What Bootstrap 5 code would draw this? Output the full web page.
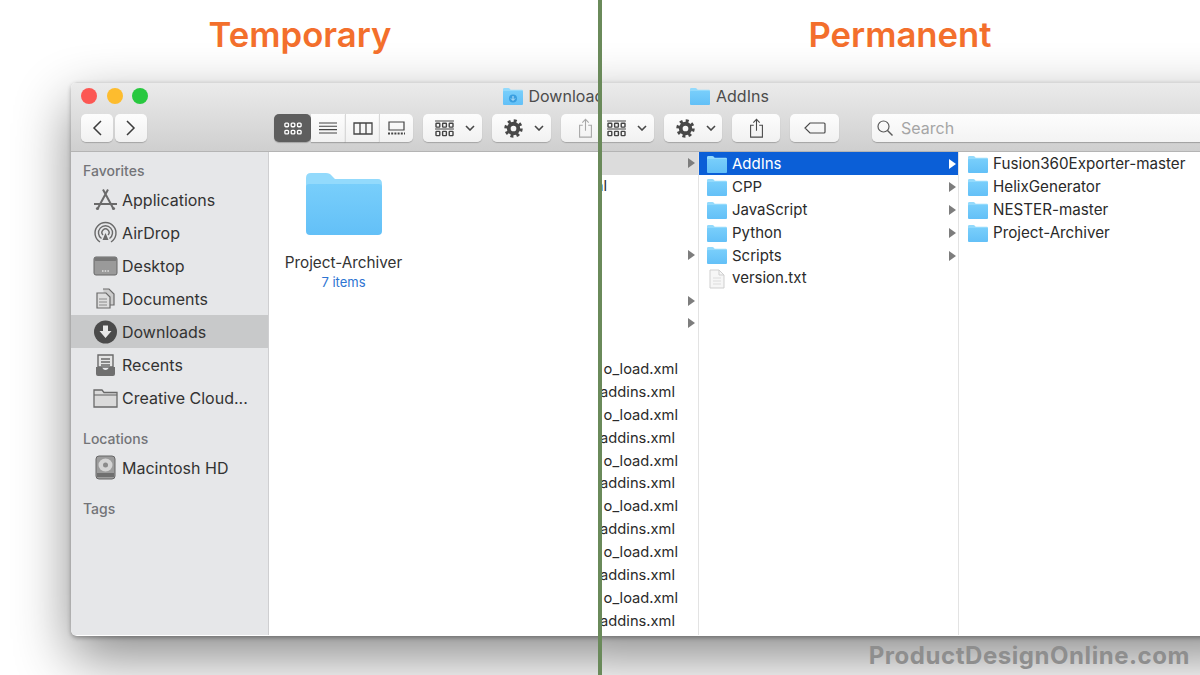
<!DOCTYPE html>
<html lang="en">
<head>
    <meta charset="UTF-8">
    <meta name="viewport" content="width=device-width, initial-scale=1.0">
    <title>Temporary vs Permanent</title>
    <link href="https://cdn.jsdelivr.net/npm/bootstrap@5.3.0/dist/css/bootstrap.min.css" rel="stylesheet">
    <style>
        html, body { height: 675px; overflow: hidden; }
        body { background: #fff; font-family: Inter, "Liberation Sans", sans-serif; color: #2f2f2f; position: relative; }
        .half { width: 600px; height: 675px; overflow: hidden; }
        .half-title { height: 82px; margin: 0; padding-top: 9px; font: 600 34.7px/50px Inter, "Liberation Sans", sans-serif; color: #f36f2c; text-align: center; }
        .mac-win { height: 554px; background: #fff; border-radius: 6px; box-shadow: 0 22px 55px rgba(0,0,0,.46), 0 2px 4px rgba(0,0,0,.3); overflow: hidden; }
        .win-left { width: 600px; margin-left: 71px; }
        .win-right { width: 700px; margin-left: -40px; }
        .chrome { height: 70px; background: linear-gradient(#ebebeb, #cfcfcf); border-top: 1px solid #d8d8d8; border-bottom: 1px solid #b4b4b4; }
        .win-title { height: 26px; font-size: 16px; color: #4c4c4c; white-space: nowrap; }
        .tl-dot { width: 16px; height: 16px; border-radius: 50%; margin-right: 9.5px; }
        .toolbar { height: 28px; margin-top: 5px; }
        .tbtn { height: 28px; padding: 0; border: 0; border-radius: 5px; background: linear-gradient(#fdfdfd, #f1f1f1); box-shadow: 0 1px 1px rgba(0,0,0,.22); display: flex; align-items: center; justify-content: center; flex: none; }
        .tbtn-menu { gap: 11px; padding-left: 5px; }
        .seg-on { background: #5e5e5e; }
        .seg-line { border-left: 1px solid #d8d8d8; }
        .searchbox { height: 28px; border-radius: 5px; background: linear-gradient(#fdfdfd, #f3f3f3); box-shadow: 0 1px 1px rgba(0,0,0,.25); color: #a5a5a5; font-size: 16px; padding-left: 5px; }
        .side { width: 198px; height: 483px; background: #e6e7e9; border-right: 1px solid #cfcfd1; padding-top: 7px; flex: none; }
        .side-head { height: 24px; line-height: 24px; padding-left: 12px; font-size: 14px; font-weight: 500; color: #737478; }
        .side-item { height: 33px; padding-left: 22px; font-size: 16px; color: #333; gap: 4px; }
        .side-item svg { flex: none; }
        .side-on { background: #c8c9ca; }
        .big-item { width: 149px; padding-top: 21px; }
        .big-name { margin-top: 18px; line-height: 20px; font-size: 15.3px; color: #333; }
        .big-sub { line-height: 18px; font-size: 13px; color: #2d74d2; }
        .col-a { width: 139px; flex: none; border-right: 1px solid #e3e3e3; }
        .col-b { width: 260px; flex: none; border-right: 1px solid #e3e3e3; }
        .frow { height: 22.87px; font-size: 15px; color: #2a2a2a; white-space: nowrap; }
        .col-a .frow { font-size: 14.7px; }
        .col-b .frow { padding-left: 8px; padding-top: 2px; gap: 5px; }
        .col-c .frow { padding-left: 9px; padding-top: 2px; gap: 5px; font-size: 15.2px; }
        .frow-grey { background: #dcdcdc; }
        .frow-blue { background: #0b5fd7; color: #fff; }
        .tri { width: 0; height: 0; border-left: 7px solid #7d7d7d; border-top: 5px solid transparent; border-bottom: 5px solid transparent; margin-left: auto; margin-right: 3px; }
        .col-b .tri { margin-right: 2px; }
        .frow-blue .tri { border-left-color: #fff; }
        .divider { position: absolute; left: 598px; top: 0; bottom: 0; width: 4px; background: #6a8a5a; }
        .watermark { position: absolute; right: 10px; top: 640px; font: 700 24px/32px Inter, "Liberation Sans", sans-serif; letter-spacing: .55px; color: #8e8e8e; }
    </style>
</head>
<body>
    <!-- shared icons -->
    <svg width="0" height="0" class="position-absolute">
        <defs>
            <linearGradient id="fgrad" x1="0" y1="0" x2="0" y2="1"><stop offset="0" stop-color="#78cefb"/><stop offset="1" stop-color="#63c0f7"/></linearGradient>
        </defs>
        <symbol id="folder" viewBox="0 0 76 62" preserveAspectRatio="none">
            <path d="M0 5Q0 0 5 0H20Q24 0 26 3L29 6H72Q76 6 76 11V30H0Z" fill="#93dafc"/>
            <path d="M0 14Q0 11 3 11H73Q76 11 76 14V58Q76 62 72 62H4Q0 62 0 58Z" fill="url(#fgrad)"/>
        </symbol>
        <symbol id="grid" viewBox="0 0 20 14">
            <g fill="none" stroke="currentColor" stroke-width="1.5"><rect x="1" y="1" width="4" height="4" rx="1"/><rect x="8" y="1" width="4" height="4" rx="1"/><rect x="15" y="1" width="4" height="4" rx="1"/><rect x="1" y="9" width="4" height="4" rx="1"/><rect x="8" y="9" width="4" height="4" rx="1"/><rect x="15" y="9" width="4" height="4" rx="1"/></g>
        </symbol>
        <symbol id="groupby" viewBox="0 0 20 18">
            <g fill="none" stroke="#444" stroke-width="1.5"><path d="M0 1h20M0 9.500h20" stroke-width="1.200"/><rect x="1" y="3.500" width="4" height="4" rx=".6"/><rect x="8" y="3.500" width="4" height="4" rx=".6"/><rect x="15" y="3.500" width="4" height="4" rx=".6"/><rect x="1" y="12" width="4" height="4.500" rx=".6"/><rect x="8" y="12" width="4" height="4.500" rx=".6"/><rect x="15" y="12" width="4" height="4.500" rx=".6"/></g>
        </symbol>
        <symbol id="gear" viewBox="0 0 20 20">
            <circle cx="10" cy="10" r="5" fill="none" stroke="#484848" stroke-width="4"/>
            <circle cx="10" cy="10" r="8" fill="none" stroke="#484848" stroke-width="3.400" stroke-dasharray="3.100 3.180"/>
        </symbol>
        <symbol id="chev" viewBox="0 0 10 6">
            <path d="M1 1l4 4 4-4" fill="none" stroke="#484848" stroke-width="1.600"/>
        </symbol>
        <symbol id="share" viewBox="0 0 16 22">
            <path d="M5 8H1.500V21H14.500V8H11M8 14V1.500M4.500 5L8 1.500 11.500 5" fill="none" stroke="currentColor" stroke-width="1.200"/>
        </symbol>
    </svg>

    <div class="d-flex">
        <!-- left half -->
        <div class="half">
            <h1 class="half-title">Temporary</h1>
            <div class="mac-win win-left">
                <div class="chrome">
                    <div class="win-title d-flex align-items-center">
                        <span class="tl-dot" style="background:#fc5753;margin-left:10px"></span>
                        <span class="tl-dot" style="background:#fdbc2e"></span>
                        <span class="tl-dot" style="background:#28c83f"></span>
                        <svg width="20" height="17" style="margin-left:345px"><use href="#folder"/><circle cx="10" cy="10.500" r="4" fill="#3a9fe0"/><path d="M10 8v4M8 10.500l2 2 2-2" stroke="#bfe6fb" fill="none"/></svg>
                        <span style="margin-left:6px">Downloads</span>
                    </div>
                    <div class="toolbar d-flex">
                        <button class="tbtn" style="width:32px;margin-left:10px"><svg width="12" height="18" viewBox="0 0 12 18"><path d="M10 2L3 9l7 7" fill="none" stroke="#3c3c3c" stroke-width="1.500"/></svg></button>
                        <button class="tbtn" style="width:32px;margin-left:2px"><svg width="12" height="18" viewBox="0 0 12 18"><path d="M2 2l7 7-7 7" fill="none" stroke="#3c3c3c" stroke-width="1.500"/></svg></button>
                        <div class="btn-group" style="margin-left:127px">
                            <button class="tbtn seg-on text-white" style="width:37px"><svg width="18" height="13"><use href="#grid"/></svg></button>
                            <button class="tbtn" style="width:34px;border-radius:0"><svg width="18" height="13" viewBox="0 0 18 13"><path d="M0 1h18M0 4.300h18M0 7.600h18M0 11h18" stroke="#444" stroke-width="1.100"/></svg></button>
                            <button class="tbtn seg-line" style="width:34px;border-radius:0"><svg width="20" height="13" viewBox="0 0 20 13"><path d="M1 1h18v11H1zM7 1v11M13 1v11" fill="none" stroke="#444" stroke-width="1.300"/></svg></button>
                            <button class="tbtn seg-line" style="width:34px;border-radius:0 5px 5px 0"><svg width="19" height="14" viewBox="0 0 19 14"><path d="M2 1h15v8H2z" fill="none" stroke="#444" stroke-width="1.200"/><path d="M1 12.500h17" stroke="#444" stroke-width="1.800" stroke-dasharray="2 1.200"/></svg></button>
                        </div>
                        <button class="tbtn tbtn-menu" style="width:59px;margin-left:10px"><svg width="19" height="17"><use href="#groupby"/></svg><svg width="10" height="6"><use href="#chev"/></svg></button>
                        <button class="tbtn tbtn-menu" style="width:59px;margin-left:10px"><svg width="19" height="19"><use href="#gear"/></svg><svg width="10" height="6"><use href="#chev"/></svg></button>
                        <button class="tbtn" style="width:48px;margin-left:10px;color:#a8a8a8"><svg width="15" height="20"><use href="#share"/></svg></button>
                    </div>
                </div>
                <div class="d-flex">
                    <div class="side">
                        <div class="side-head">Favorites</div>
                        <div class="side-item d-flex align-items-center">
                            <svg width="25" height="24" viewBox="0 0 25 24"><path d="M10 1.500l10 18.500M15 1.500L5 20" stroke="#6a6a6a" stroke-width="2" fill="none"/><path d="M1 16h23" stroke="#6a6a6a" stroke-width="2.200"/><circle cx="4.500" cy="20.500" r="1.600" fill="#6a6a6a"/><circle cx="20.500" cy="20.500" r="1.600" fill="#6a6a6a"/></svg>
                            Applications
                        </div>
                        <div class="side-item d-flex align-items-center">
                            <svg width="25" height="24" viewBox="0 0 25 24"><g fill="none" stroke="#6a6a6a" stroke-width="1.400"><path d="M7 21a10.500 10.500 0 1 1 11 0"/><path d="M8.500 17.500a7 7 0 1 1 8 0"/><path d="M10 14a3.500 3.500 0 1 1 5 0"/></g><path d="M12.500 12l3 7h-6z" fill="#6a6a6a"/></svg>
                            AirDrop
                        </div>
                        <div class="side-item d-flex align-items-center">
                            <svg width="25" height="22" viewBox="0 0 25 22"><rect x="1" y="2" width="23" height="18" rx="2" fill="#9a9a9a" stroke="#666"/><rect x="1.500" y="2.500" width="22" height="3.500" rx="1.500" fill="#777"/><path d="M9 16h7" stroke="#e2e2e2" stroke-width="1.500" stroke-dasharray="1.500 1.200"/></svg>
                            Desktop
                        </div>
                        <div class="side-item d-flex align-items-center">
                            <svg width="25" height="24" viewBox="0 0 25 24"><path d="M10 2h6l5 5v11h-8" fill="#ccc" stroke="#6a6a6a" stroke-width="1.200"/><path d="M4 6h9l4 4v11H4z" fill="#ddd" stroke="#6a6a6a" stroke-width="1.200"/><path d="M6 12h8M6 15h8M6 18h8" stroke="#8a8a8a"/></svg>
                            Documents
                        </div>
                        <div class="side-item side-on d-flex align-items-center">
                            <svg width="25" height="24" viewBox="0 0 25 24"><circle cx="12.500" cy="12" r="11.500" fill="#4b4b4b"/><path d="M10 5.500h5V11h3.500l-6 7-6-7H10z" fill="#e8e8e8"/></svg>
                            Downloads
                        </div>
                        <div class="side-item d-flex align-items-center">
                            <svg width="25" height="24" viewBox="0 0 25 24"><path d="M5 2h15v12H5z" fill="#e4e4e4" stroke="#6a6a6a" stroke-width="1.400"/><path d="M8 6h9M8 9h9M8 12h9" stroke="#6a6a6a" stroke-width="1.300"/><path d="M3 14h6q1 3 3.500 3T16 14h6v7q0 2-2 2H5q-2 0-2-2z" fill="#6f6f6f"/></svg>
                            Recents
                        </div>
                        <div class="side-item d-flex align-items-center">
                            <svg width="25" height="20" viewBox="0 0 25 20"><path d="M1 2h8l2 2.500h13V19H1z" fill="#dadada" stroke="#6a6a6a" stroke-width="1.300"/><path d="M1 7h23" stroke="#6a6a6a" stroke-width="1.100"/></svg>
                            Creative Cloud...
                        </div>
                        <div class="side-head" style="margin-top:13px">Locations</div>
                        <div class="side-item d-flex align-items-center">
                            <svg width="25" height="25" viewBox="0 0 25 25"><rect x="3" y="1" width="19" height="23" rx="3" fill="#9c9c9c" stroke="#666"/><ellipse cx="12.500" cy="10" rx="7" ry="6.500" fill="#d4d4d4"/><circle cx="12.500" cy="10" r="2.500" fill="#8a8a8a"/><rect x="4" y="18" width="17" height="4" fill="#6f6f6f"/></svg>
                            Macintosh HD
                        </div>
                        <div class="side-head" style="margin-top:13px">Tags</div>
                    </div>
                    <div class="big-item text-center">
                        <svg width="76" height="62"><use href="#folder"/></svg>
                        <div class="big-name">Project-Archiver</div>
                        <div class="big-sub">7 items</div>
                    </div>
                </div>
            </div>
        </div>

        <!-- right half -->
        <div class="half">
            <h1 class="half-title">Permanent</h1>
            <div class="mac-win win-right">
                <div class="chrome">
                    <div class="win-title d-flex align-items-center" style="padding-left:130px">
                        <svg width="20" height="17"><use href="#folder"/></svg>
                        <span style="margin-left:6px">AddIns</span>
                    </div>
                    <div class="toolbar d-flex">
                        <button class="tbtn tbtn-menu" style="width:60px;margin-left:34px"><svg width="19" height="17"><use href="#groupby"/></svg><svg width="10" height="6"><use href="#chev"/></svg></button>
                        <button class="tbtn tbtn-menu" style="width:58px;margin-left:10px"><svg width="19" height="19"><use href="#gear"/></svg><svg width="10" height="6"><use href="#chev"/></svg></button>
                        <button class="tbtn" style="width:48px;margin-left:10px;color:#4a4a4a"><svg width="15" height="20"><use href="#share"/></svg></button>
                        <button class="tbtn" style="width:49px;margin-left:10px"><svg width="22" height="12" viewBox="0 0 22 12"><path d="M6 1h14q1 0 1 1v8q0 1-1 1H6L1 6zM5 6h.1" fill="none" stroke="#4a4a4a" stroke-width="1.200"/></svg></button>
                        <div class="searchbox d-flex align-items-center flex-grow-1" style="margin-left:33px">
                            <svg width="16" height="16" viewBox="0 0 16 16" class="me-1"><circle cx="6.500" cy="6.500" r="5.500" fill="none" stroke="#5a5a5a" stroke-width="1.200"/><path d="M10.500 10.500l5 5" stroke="#5a5a5a" stroke-width="1.400"/></svg>
                            <span class="ms-1">Search</span>
                        </div>
                    </div>
                </div>
                <div class="d-flex" style="height:483px">
                    <div class="col-a" id="colA"></div>
                    <div class="col-b">
                        <div class="frow frow-blue d-flex align-items-center"><svg width="20" height="17"><use href="#folder"/></svg>AddIns<span class="tri"></span></div>
                        <div class="frow d-flex align-items-center"><svg width="20" height="17"><use href="#folder"/></svg>CPP<span class="tri"></span></div>
                        <div class="frow d-flex align-items-center"><svg width="20" height="17"><use href="#folder"/></svg>JavaScript<span class="tri"></span></div>
                        <div class="frow d-flex align-items-center"><svg width="20" height="17"><use href="#folder"/></svg>Python<span class="tri"></span></div>
                        <div class="frow d-flex align-items-center"><svg width="20" height="17"><use href="#folder"/></svg>Scripts<span class="tri"></span></div>
                        <div class="frow d-flex align-items-center"><svg width="20" height="20" viewBox="0 0 20 20"><path d="M3 1h9l5 5v13H3z" fill="#f6f6f6" stroke="#cfcfcf"/><path d="M12 1v5h5" fill="none" stroke="#cfcfcf"/><path d="M6 9h8M6 12h8M6 15h8" stroke="#dcdcdc"/></svg>version.txt</div>
                    </div>
                    <div class="col-c flex-grow-1">
                        <div class="frow d-flex align-items-center"><svg width="20" height="17"><use href="#folder"/></svg>Fusion360Exporter-master</div>
                        <div class="frow d-flex align-items-center"><svg width="20" height="17"><use href="#folder"/></svg>HelixGenerator</div>
                        <div class="frow d-flex align-items-center"><svg width="20" height="17"><use href="#folder"/></svg>NESTER-master</div>
                        <div class="frow d-flex align-items-center"><svg width="20" height="17"><use href="#folder"/></svg>Project-Archiver</div>
                    </div>
                </div>
            </div>
        </div>
    </div>

    <div class="divider"></div>
    <div class="watermark">ProductDesignOnline.com</div>

    <script>
        // first column: only the tail of each row is in view
        let colA = document.getElementById('colA');
        for (let i = 0; i < 21; i++) {
            let row = document.createElement('div');
            row.className = 'frow d-flex align-items-center justify-content-end';
            if (i == 0) row.classList.add('frow-grey');
            if ([0, 4, 6, 7].includes(i)) {
                row.innerHTML = '<span class="tri"></span>';
            } else if (i == 1) {
                row.innerHTML = '<span style="margin-right:91px">al</span>';
            } else if (i >= 9) {
                row.innerHTML = i % 2
                    ? '<span style="margin-right:20px">o_load.xml</span>'
                    : '<span style="margin-right:23px">addins.xml</span>';
            }
            colA.appendChild(row);
        }
    </script>
    <script src="https://cdn.jsdelivr.net/npm/bootstrap@5.3.0/dist/js/bootstrap.bundle.min.js"></script>
</body>
</html>
